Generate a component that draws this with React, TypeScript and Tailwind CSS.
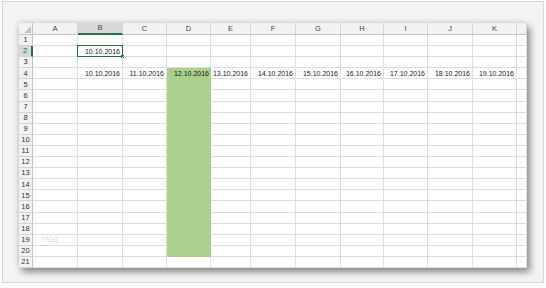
const COLS = ["A", "B", "C", "D", "E", "F", "G", "H", "I", "J", "K", ""];
const WIDTH_CLASSES = [
  "w-[45px]", "w-[45px]", "w-[44px]", "w-[44px]", "w-[40px]", "w-[45px]",
  "w-[45px]", "w-[43px]", "w-[44px]", "w-[45px]", "w-[44px]", "w-[10px]",
];
const ROWS = Array.from({ length: 21 }, (_, i) => i + 1);

function cellText(row: number, col: number) {
  if (row === 2 && col === 1) return "10.10.2016";
  if (row === 4 && col >= 1 && col <= 10) return `${10 + col - 1}.10.2016`;
  return "";
}

function Corner() {
  return (
    <div className="flex h-full w-[14px] items-end justify-end border-r border-b border-[#c6c6c6] bg-[#f2f2f2] p-[1px]">
      <svg width="7" height="7" viewBox="0 0 7 7">
        <polygon points="7,0 7,7 0,7" fill="#c4c4c4" />
      </svg>
    </div>
  );
}

export default function App() {
  return (
    <div className="h-[288px] w-[546px] bg-white pt-[1px] font-['Liberation_Sans',sans-serif]">
      <div className="mx-[2px] h-[282px] border border-[#d6d6d6] bg-[#f4f4f4] pt-[21px] pl-[16px]">
        <div className="w-[508px] bg-white shadow-[3px_4px_7px_rgba(0,0,0,0.45),-2px_-2px_6px_rgba(0,0,0,0.08)]">
          {/* column header */}
          <div className="flex h-[12px]">
            <Corner />
            {COLS.map((c, i) => (
              <div
                key={i}
                className={`${WIDTH_CLASSES[i]} flex items-center justify-center border-r border-[#d4d4d4] text-[7.5px] leading-none ${
                  i === 1
                    ? "border-b-2 border-b-[#217346] bg-[#d8d8d8] text-[#1e5c38]"
                    : "border-b border-b-[#c6c6c6] bg-[#f2f2f2] text-[#444]"
                }`}
              >
                {c}
              </div>
            ))}
          </div>
          {ROWS.map((r) => (
            <div key={r} className="flex h-[11.1px]">
              <div
                className={`flex w-[14px] items-center justify-center border-b border-[#d4d4d4] text-[7.5px] leading-none ${
                  r === 2
                    ? "border-r-2 border-r-[#217346] bg-[#d8d8d8] text-[#1e5c38]"
                    : "border-r border-r-[#c6c6c6] bg-[#f2f2f2] text-[#333]"
                }`}
              >
                {r}
              </div>
              {COLS.map((_, i) => {
                const green = i === 3 && r >= 4 && r <= 20;
                const selected = r === 2 && i === 1;
                return (
                  <div
                    key={i}
                    className={`${WIDTH_CLASSES[i]} relative flex items-center justify-end pr-[2px] text-[7px] leading-none text-[#1a1a1a] ${
                      green
                        ? "bg-[#a9d08e]"
                        : "border-r border-b border-[#dedede]"
                    }`}
                  >
                    {r === 19 && i === 0 && (
                      <span className="absolute left-[8px] text-[9px] text-[#e2e2e2]">
                        blog
                      </span>
                    )}
                    {cellText(r, i)}
                    {selected && (
                      <>
                        <div className="absolute inset-[-1px] border border-[#217346]" />
                        <div className="absolute right-[-2px] bottom-[-2px] h-[3px] w-[3px] bg-[#217346]" />
                      </>
                    )}
                  </div>
                );
              })}
            </div>
          ))}
        </div>
      </div>
    </div>
  );
}
